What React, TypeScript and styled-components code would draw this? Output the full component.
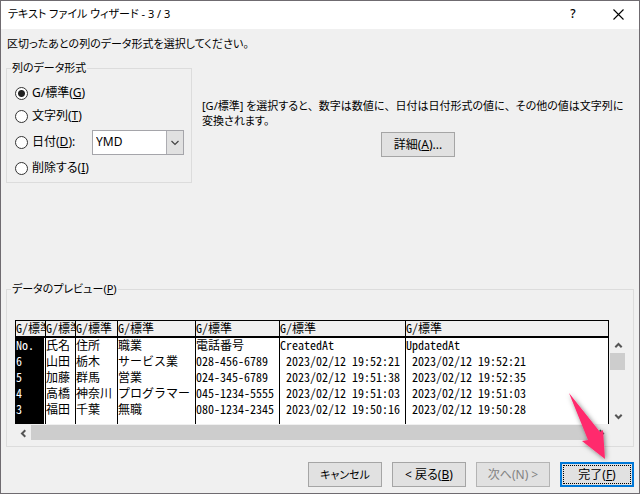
import React from "react";
import styled, { createGlobalStyle, css } from "styled-components";

const GlobalStyle = createGlobalStyle`
  * { box-sizing: border-box; }
  body {
    margin: 0;
    background: #f0f0f0;
    color: #000;
    font-family: "Noto Sans", "Noto Sans CJK JP", sans-serif;
    font-size: 12px;
    line-height: 16px;
    font-feature-settings: "palt";
  }
  button, select, input { font: inherit; font-feature-settings: inherit; color: inherit; }
`;

const Dialog = styled.main`
  min-height: 100vh;
  display: flex;
  flex-direction: column;
  background: #f0f0f0;
  border: 1px solid #6f6b70;
`;

const TitleBar = styled.header`
  display: flex;
  align-items: center;
  height: 28px;
  padding: 0 12px 2px 7px;
  background: #fff;
`;

const Title = styled.h1`
  flex: 1;
  margin: 0;
  font-size: 11px;
  font-weight: 400;
`;

const CaptionButton = styled.button`
  display: grid;
  place-items: center;
  width: 18px;
  height: 18px;
  margin-left: 27px;
  padding: 0;
  border: 0;
  background: none;
  font-weight: 500;
`;

const Content = styled.div`
  flex: 1;
  display: flex;
  flex-direction: column;
  padding: 7px 5px 6px;
`;

const Lead = styled.p`
  margin: 0 0 8px 1px;
  font-size: 11px;
`;

const Group = styled.fieldset`
  min-width: 0;
  margin: 0;
  padding: 0;
  border: 1px solid #dcdcdc;
`;

const Legend = styled.legend`
  margin-left: -4px;
  padding: 0 1px;
  font-size: 11px;
`;

const FormatArea = styled.section`
  display: flex;
  align-items: flex-start;
`;

const FormatGroup = styled(Group)`
  flex: 0 0 186px;
  padding: 5px 7px 3px 8px;
`;

const Option = styled.div<{ $height: number }>`
  display: flex;
  align-items: center;
  height: ${(p) => p.$height}px;
`;

const OptionLabel = styled.label`
  display: flex;
  align-items: center;
  gap: 4px;
`;

const Radio = styled.input`
  appearance: none;
  width: 13px;
  height: 13px;
  margin: 0;
  border: 1px solid #333;
  border-radius: 50%;
  background: #fff;
  &:checked {
    background: radial-gradient(circle, #222 3px, #fff 4px);
  }
`;

const SelectBox = styled.div`
  position: relative;
  width: 92px;
  height: 25px;
  margin-left: auto;
`;

const Select = styled.select`
  appearance: none;
  width: 100%;
  height: 100%;
  padding: 0 20px 0 3px;
  border: 1px solid #a5a5aa;
  border-radius: 0;
  background: linear-gradient(#adadb2, #adadb2) right 16px top / 1px 100% no-repeat,
    linear-gradient(#e1e1e1, #e1e1e1) right top / 16px 100% no-repeat, #fff;
`;

const SelectArrow = styled.svg`
  position: absolute;
  right: 5px;
  top: 10px;
  pointer-events: none;
`;

const Description = styled.div`
  flex: 1;
  display: flex;
  flex-direction: column;
  align-items: flex-start;
  padding: 38px 0 0 10px;
`;

const DescriptionText = styled.p`
  margin: 0 0 4px;
  font-size: 11px;
  line-height: 15px;
`;

const FullWidth = styled.span`
  font-feature-settings: normal;
`;

const Button = styled.button<{ $primary?: boolean; $compact?: boolean }>`
  min-width: 74px;
  height: 25px;
  padding: 0 4px;
  border: 1px solid #a5a5a5;
  background: #e1e1e1;
  font-size: ${(p) => (p.$compact ? 11 : 12)}px;
  white-space: nowrap;
  &:disabled { color: #838383; border-color: #b4b4b4; }
  ${(p) =>
    p.$primary &&
    css`
      border: 2px solid #0078d7;
      outline: 1px dotted #000;
      outline-offset: -4px;
    `}
`;

const DetailsButton = styled(Button)`
  align-self: center;
`;

const PreviewGroup = styled(Group)`
  margin-top: auto;
  padding: 23px 7px 6px 8px;
`;

const PreviewBody = styled.div`
  display: grid;
  grid-template-columns: 1fr 16px;
  column-gap: 1px;
`;

const PreviewTable = styled.table`
  width: 100%;
  table-layout: fixed;
  border-collapse: separate;
  border-spacing: 0;
  border-top: 1px solid #000;
  border-right: 1px solid #000;
  background: #fff;
  font-family: "Noto Sans CJK JP", sans-serif;
  font-feature-settings: "hwid";
`;

const HeadCell = styled.th`
  height: 17px;
  padding: 0;
  border-left: 1px solid #000;
  border-bottom: 2px solid #000;
  background: #f0f0f0;
  font-weight: 400;
  line-height: 14px;
  text-align: left;
  vertical-align: top;
  white-space: nowrap;
  overflow-x: clip;
`;

const Cell = styled.td<{ $selected: boolean; $filler?: boolean }>`
  height: ${(p) => (p.$filler ? 6 : 16)}px;
  padding: 0;
  border-left: 1px solid #000;
  line-height: 14px;
  vertical-align: top;
  white-space: pre;
  ${(p) =>
    p.$selected &&
    css`
      background: #000;
      color: #fff;
      border-right: 1px solid #fff;
    `}
`;

const VerticalBar = styled.div`
  display: flex;
  flex-direction: column;
  margin-top: 17px;
`;

const HorizontalBar = styled.div`
  display: flex;
  height: 16px;
  padding-top: 1px;
`;

const ScrollButton = styled.button`
  display: grid;
  place-items: center;
  width: 16px;
  height: 16px;
  padding: 0;
  border: 0;
  background: none;
`;

const VerticalThumb = styled.div`
  width: 15px;
  height: 17px;
  margin-bottom: auto;
  background: #cdcdcd;
`;

const HorizontalThumb = styled.div`
  flex: 1;
  height: 15px;
  background: #cdcdcd;
`;

const Footer = styled.footer`
  position: relative;
  display: flex;
  justify-content: flex-end;
  gap: 10px;
  margin-top: 15px;
`;

const Pointer = styled.svg`
  position: absolute;
  right: 22px;
  bottom: 25px;
  pointer-events: none;
`;

const turns = { up: 0, right: 90, down: 180, left: 270 };

function ScrollArrow({ to }: { to: keyof typeof turns }) {
  return (
    <svg width="9" height="9" viewBox="0 0 9 9" aria-hidden="true">
      <path
        d="M1.300 6.300 4.500 3 7.700 6.300"
        fill="none"
        stroke="#555"
        strokeWidth="2"
        transform={`rotate(${turns[to]} 4.5 4.5)`}
      />
    </svg>
  );
}

const columnWidths = [30, 30, 42, 78, 84, 126];

const rows = [
  ["No.", "氏名", "住所", "職業", "電話番号", "CreatedAt", "UpdatedAt"],
  ["6", "山田", "栃木", "サービス業", "028-456-6789", " 2023/02/12 19:52:21", " 2023/02/12 19:52:21"],
  ["5", "加藤", "群馬", "営業", "024-345-6789", " 2023/02/12 19:51:38", " 2023/02/12 19:52:35"],
  ["4", "高橋", "神奈川", "プログラマー", "045-1234-5555", " 2023/02/12 19:51:03", " 2023/02/12 19:51:03"],
  ["3", "福田", "千葉", "無職", "080-1234-2345", " 2023/02/12 19:50:16", " 2023/02/12 19:50:28"],
];

export default function App() {
  return (
    <Dialog>
      <GlobalStyle />
      <TitleBar>
        <Title>テキスト ファイル ウィザード - 3 / 3</Title>
        <CaptionButton aria-label="ヘルプ">?</CaptionButton>
        <CaptionButton aria-label="閉じる">
          <svg width="11" height="11" viewBox="0 0 11 11" aria-hidden="true">
            <path d="M.5.5l10 10M10.500.5l-10 10" stroke="#000" strokeWidth="1.100" />
          </svg>
        </CaptionButton>
      </TitleBar>
      <Content>
        <Lead>区切ったあとの列のデータ形式を選択してください。</Lead>
        <FormatArea>
          <FormatGroup>
            <Legend>列のデータ形式</Legend>
            <Option $height={24}>
              <OptionLabel>
                <Radio type="radio" name="format" defaultChecked />
                <span>G/標準(<u>G</u>)</span>
              </OptionLabel>
            </Option>
            <Option $height={22}>
              <OptionLabel>
                <Radio type="radio" name="format" />
                <span>文字列(<u>T</u>)</span>
              </OptionLabel>
            </Option>
            <Option $height={30}>
              <OptionLabel>
                <Radio type="radio" name="format" />
                <span>日付(<u>D</u>):</span>
              </OptionLabel>
              <SelectBox>
                <Select aria-label="日付の形式" defaultValue="YMD">
                  <option>YMD</option>
                  <option>MDY</option>
                  <option>DMY</option>
                </Select>
                <SelectArrow width="8" height="6" viewBox="0 0 8 6" aria-hidden="true">
                  <path d="M.5 1 4 4.500 7.500 1" fill="none" stroke="#444" strokeWidth="1.200" />
                </SelectArrow>
              </SelectBox>
            </Option>
            <Option $height={22}>
              <OptionLabel>
                <Radio type="radio" name="format" />
                <span>削除する(<u>I</u>)</span>
              </OptionLabel>
            </Option>
          </FormatGroup>
          <Description>
            <DescriptionText>
              [G/標準] を選択すると<FullWidth>、</FullWidth>数字は数値に<FullWidth>、</FullWidth>
              日付は日付形式の値に<FullWidth>、</FullWidth>その他の値は文字列に
              <br />
              変換されます。
            </DescriptionText>
            <DetailsButton>詳細(<u>A</u>)...</DetailsButton>
          </Description>
        </FormatArea>
        <PreviewGroup>
          <Legend>データのプレビュー(<u>P</u>)</Legend>
          <PreviewBody>
            <PreviewTable>
              <colgroup>
                {columnWidths.map((width, i) => (
                  <col key={i} width={width} />
                ))}
                <col />
              </colgroup>
              <thead>
                <tr>
                  {rows[0].map((name) => (
                    <HeadCell key={name} scope="col">G/標準</HeadCell>
                  ))}
                </tr>
              </thead>
              <tbody>
                {rows.map((row) => (
                  <tr key={row[0]}>
                    {row.map((value, i) => (
                      <Cell key={i} $selected={i === 0}>{value}</Cell>
                    ))}
                  </tr>
                ))}
                <tr aria-hidden="true">
                  {rows[0].map((name, i) => (
                    <Cell key={name} $selected={i === 0} $filler />
                  ))}
                </tr>
              </tbody>
            </PreviewTable>
            <VerticalBar>
              <ScrollButton aria-label="上へ"><ScrollArrow to="up" /></ScrollButton>
              <VerticalThumb />
              <ScrollButton aria-label="下へ"><ScrollArrow to="down" /></ScrollButton>
            </VerticalBar>
            <HorizontalBar>
              <ScrollButton aria-label="左へ"><ScrollArrow to="left" /></ScrollButton>
              <HorizontalThumb />
              <ScrollButton aria-label="右へ"><ScrollArrow to="right" /></ScrollButton>
            </HorizontalBar>
          </PreviewBody>
        </PreviewGroup>
        <Footer>
          <Button $compact>キャンセル</Button>
          <Button>&lt; 戻る(<u>B</u>)</Button>
          <Button disabled>次へ(N) &gt;</Button>
          <Button $primary>完了(<u>F</u>)</Button>
          <Pointer width="50" height="76" viewBox="0 0 50 76" aria-hidden="true">
            <defs>
              <filter id="shadow" x="-30%" y="-20%" width="160%" height="150%">
                <feDropShadow dx="1" dy="1" stdDeviation="2.500" floodOpacity="0.5" />
              </filter>
            </defs>
            <path d="M7 7 38 46 41 44 43 73 20 55 26 54Z" fill="#ff2a6d" filter="url(#shadow)" />
          </Pointer>
        </Footer>
      </Content>
    </Dialog>
  );
}
